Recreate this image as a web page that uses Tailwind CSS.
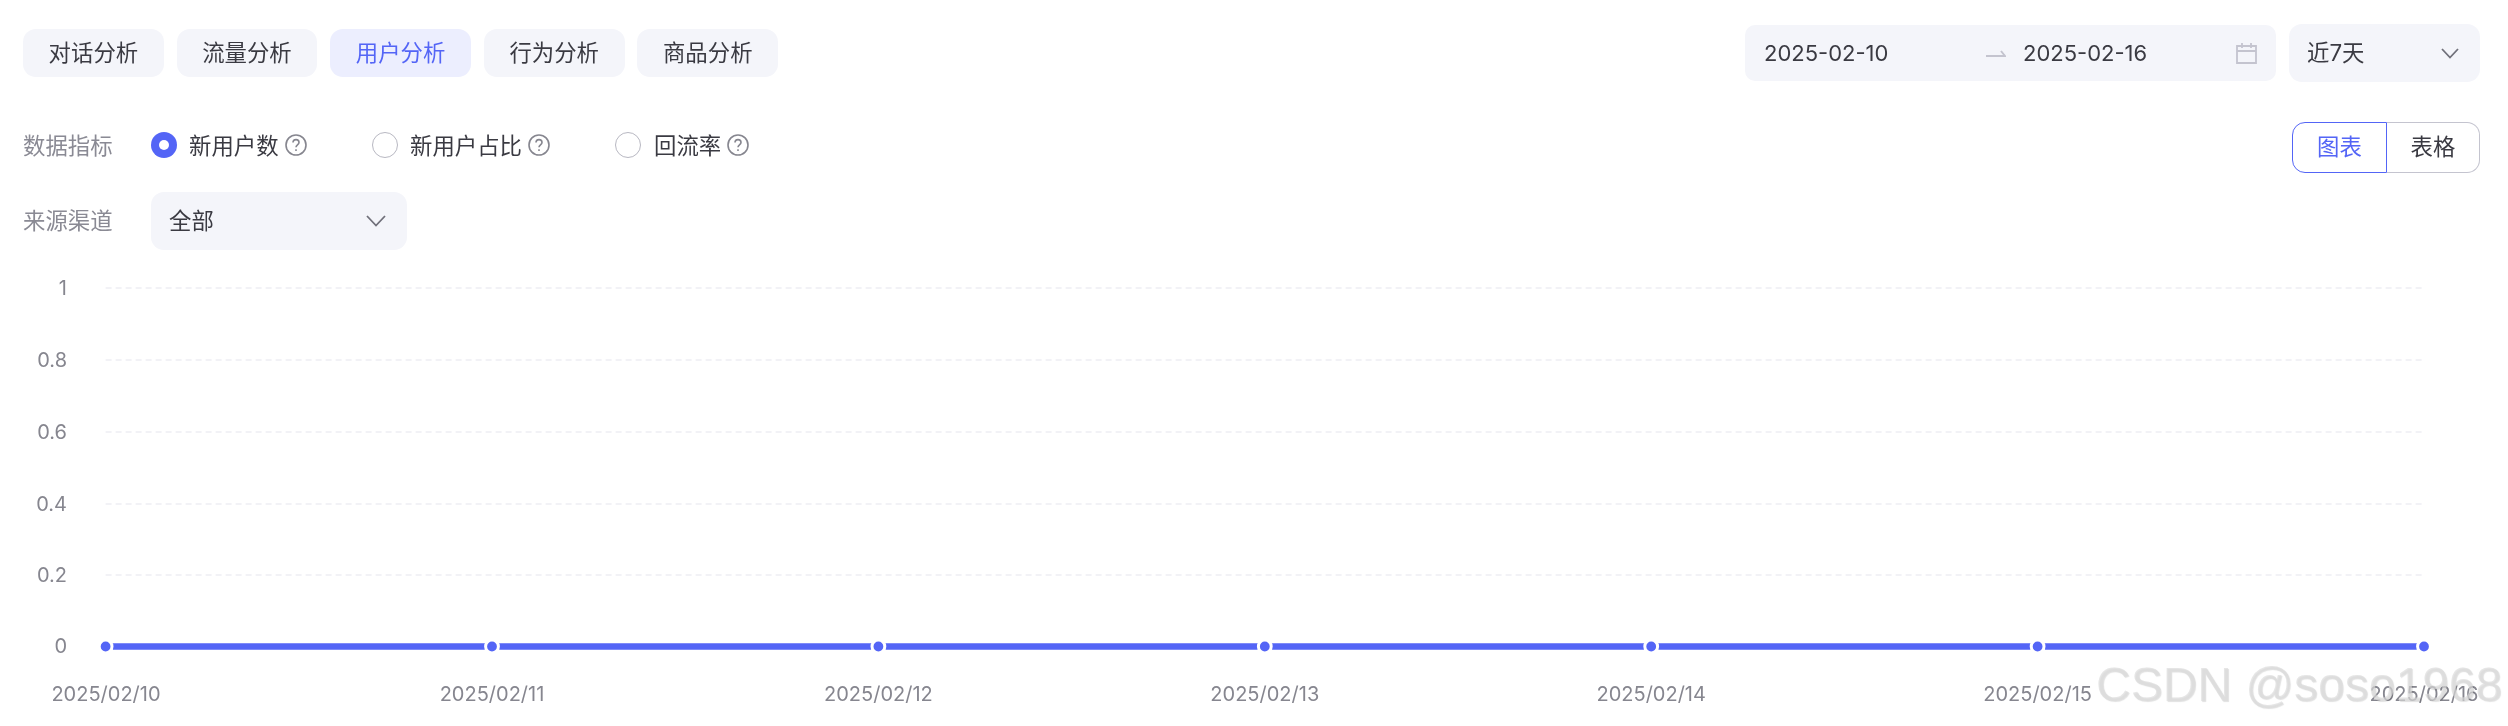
<!DOCTYPE html>
<html lang="zh">
<head>
<meta charset="utf-8">
<script src="https://cdn.jsdelivr.net/npm/@tailwindcss/browser@4"></script>
</head>
<body class="bg-white">
<div class="relative w-[2508px] h-[726px] overflow-hidden bg-white blur-[0.5px] text-[22.4px] text-[#3a3a42] font-['Inter','Noto_Sans_CJK_SC',sans-serif]">
  <div class="flex justify-between items-center pt-[24px] pl-[23px] pr-[28px]">
    <div class="flex gap-[12.8px] text-center leading-[48px]">
      <div class="w-[140.8px] h-[48px] rounded-[13px] bg-[#f4f5fa]">对话分析</div>
      <div class="w-[140.8px] h-[48px] rounded-[13px] bg-[#f4f5fa]">流量分析</div>
      <div class="w-[140.8px] h-[48px] rounded-[13px] bg-[#eceefe] text-[#5465f6]">用户分析</div>
      <div class="w-[140.8px] h-[48px] rounded-[13px] bg-[#f4f5fa]">行为分析</div>
      <div class="w-[140.8px] h-[48px] rounded-[13px] bg-[#f4f5fa]">商品分析</div>
    </div>
    <div class="flex items-center gap-[13px]">
      <div class="flex items-center w-[531px] h-[56px] rounded-[10px] bg-[#f4f5fa] pl-[19px]">
        <span class="w-[222px] text-[22px]">2025-02-10</span>
        <svg class="w-[20px] h-[10px] mr-[17px]" viewBox="0 0 20 10" fill="none" stroke="#c4c4cf" stroke-width="2"><path d="M0 8H19L15 3"/></svg>
        <span class="w-[213px] text-[22px]">2025-02-16</span>
        <svg class="w-[21px] h-[22px]" viewBox="0 0 21 22" fill="none" stroke="#c4c4cf" stroke-width="1.8"><path d="M1 4h19v17H1zM1 9h19M6 1v5M15 1v5"/></svg>
      </div>
      <div class="flex items-center justify-between w-[191px] h-[58px] rounded-[13px] bg-[#f4f5fa] pl-[18px] pr-[21px]">
        <span>近7天</span>
        <svg class="w-[18px] h-[11px]" viewBox="0 0 18 11" fill="none" stroke="#70707a" stroke-width="1.8"><path d="M1 1l8 8.5 8-8.5"/></svg>
      </div>
    </div>
  </div>

  <div class="flex justify-between items-center mt-[40px] pl-[23px] pr-[28px] h-[51px]">
    <div class="flex items-center pb-[4px]">
      <span class="w-[128px] text-[#8a8a94]">数据指标</span>
      <div class="flex items-center w-[221px]">
        <span class="flex items-center justify-center w-[26px] h-[26px] rounded-full bg-[#5465f6]"><span class="w-[10px] h-[10px] rounded-full bg-white"></span></span>
        <span class="ml-[12px]">新用户数</span>
        <svg class="ml-[6px] w-[22px] h-[22px]" viewBox="0 0 22 22" fill="none" stroke="#86868f" stroke-width="1.6"><circle cx="11" cy="11" r="10"/><path d="M8 8.6c0-1.8 1.3-3 3-3s3 1.2 3 2.8c0 2.4-3 2.4-3 4.8"/><path d="M11 15.2v1.8"/></svg>
      </div>
      <div class="flex items-center w-[243px]">
        <span class="w-[26px] h-[26px] rounded-full border-[1.6px] border-[#b8b8c2]"></span>
        <span class="ml-[12px]">新用户占比</span>
        <svg class="ml-[6px] w-[22px] h-[22px]" viewBox="0 0 22 22" fill="none" stroke="#86868f" stroke-width="1.6"><circle cx="11" cy="11" r="10"/><path d="M8 8.6c0-1.8 1.3-3 3-3s3 1.2 3 2.8c0 2.4-3 2.4-3 4.8"/><path d="M11 15.2v1.8"/></svg>
      </div>
      <div class="flex items-center">
        <span class="w-[26px] h-[26px] rounded-full border-[1.6px] border-[#b8b8c2]"></span>
        <span class="ml-[13px]">回流率</span>
        <svg class="ml-[6px] w-[22px] h-[22px]" viewBox="0 0 22 22" fill="none" stroke="#86868f" stroke-width="1.6"><circle cx="11" cy="11" r="10"/><path d="M8 8.6c0-1.8 1.3-3 3-3s3 1.2 3 2.8c0 2.4-3 2.4-3 4.8"/><path d="M11 15.2v1.8"/></svg>
      </div>
    </div>
    <div class="flex w-[188px] h-[51px] text-center leading-[48px]">
      <div class="w-[95px] rounded-l-[13px] border-[1.6px] border-[#5465f6] text-[#5465f6]">图表</div>
      <div class="flex-1 rounded-r-[13px] border-[1.6px] border-l-0 border-[#c4c4cf]">表格</div>
    </div>
  </div>

  <div class="flex items-center mt-[19px] pl-[23px]">
    <span class="w-[128px] text-[#8a8a94]">来源渠道</span>
    <div class="flex items-center justify-between w-[256px] h-[58px] rounded-[13px] bg-[#f4f5fa] pl-[18px] pr-[21px]">
      <span>全部</span>
      <svg class="w-[20px] h-[12px]" viewBox="0 0 20 12" fill="none" stroke="#70707a" stroke-width="1.8"><path d="M1 1l9 9.5 9-9.5"/></svg>
    </div>
  </div>

  <svg class="block mt-[20px] w-[2508px] h-[456px]" viewBox="0 270 2508 456" font-family="Inter, 'Noto Sans CJK SC', sans-serif">
    <g stroke="#eeeef3" stroke-width="1.6" stroke-dasharray="6 4">
      <path d="M105.6 288H2424"/><path d="M105.6 360H2424"/><path d="M105.6 432H2424"/><path d="M105.6 504H2424"/><path d="M105.6 575H2424"/>
    </g>
    <g font-size="20" fill="#86868f" text-anchor="end">
      <text x="67" y="294.5">1</text>
      <text x="67" y="366.5">0.8</text>
      <text x="67" y="438.5">0.6</text>
      <text x="67" y="510.5">0.4</text>
      <text x="67" y="582">0.2</text>
      <text x="67" y="653">0</text>
    </g>
    <path d="M105.6 646.5H2424" stroke="#5465f6" stroke-width="6.4"/>
    <g fill="#5465f6" stroke="#fff" stroke-width="3">
      <circle cx="105.6" cy="646.5" r="6.4"/><circle cx="492" cy="646.5" r="6.4"/><circle cx="878.4" cy="646.5" r="6.4"/><circle cx="1264.8" cy="646.5" r="6.4"/><circle cx="1651.2" cy="646.5" r="6.4"/><circle cx="2037.6" cy="646.5" r="6.4"/><circle cx="2424" cy="646.5" r="6.4"/>
    </g>
    <g font-size="20" fill="#86868f" text-anchor="middle">
      <text x="106" y="701">2025/02/10</text>
      <text x="492" y="701">2025/02/11</text>
      <text x="878.4" y="701">2025/02/12</text>
      <text x="1264.8" y="701">2025/02/13</text>
      <text x="1651.2" y="701">2025/02/14</text>
      <text x="2037.6" y="701">2025/02/15</text>
      <text x="2424" y="701">2025/02/16</text>
    </g>
  </svg>

  <div class="absolute left-[2096px] top-[657px] text-[48px] leading-[56px] whitespace-nowrap text-[#dcdcdc]/70 font-['Liberation_Sans',sans-serif] [text-shadow:1px_1px_1px_rgba(0,0,0,0.12)]">CSDN @soso1968</div>
</div>
</body>
</html>
